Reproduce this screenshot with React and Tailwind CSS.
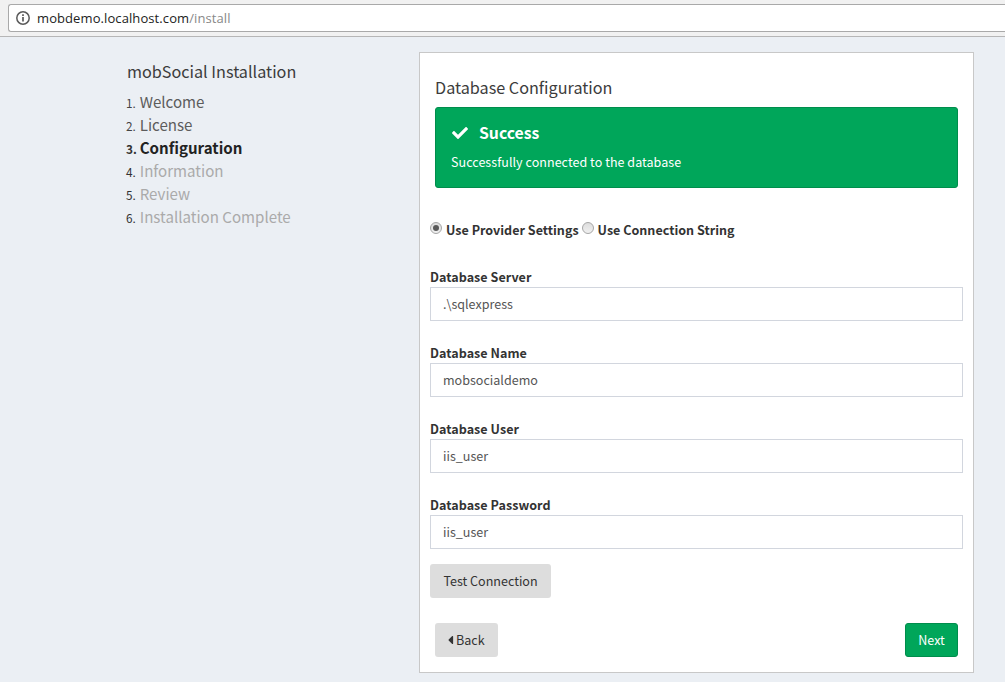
import React from "react";
import { FaCheck, FaCaretLeft } from "react-icons/fa";

const steps = [
  { name: "Welcome", tone: "text-[#5c5c5c]", num: "text-[#444444]" },
  { name: "License", tone: "text-[#5c5c5c]", num: "text-[#444444]" },
  { name: "Configuration", tone: "text-[#222222] font-bold", num: "text-[#333333] font-bold" },
  { name: "Information", tone: "text-[#aaaaaa]", num: "text-[#333333]" },
  { name: "Review", tone: "text-[#aaaaaa]", num: "text-[#333333]" },
  { name: "Installation Complete", tone: "text-[#aaaaaa]", num: "text-[#333333]" },
];

const fields = [
  { label: "Database Server", value: ".\\sqlexpress" },
  { label: "Database Name", value: "mobsocialdemo" },
  { label: "Database User", value: "iis_user" },
  { label: "Database Password", value: "iis_user" },
];

function AddressBar() {
  return (
    <header className="flex h-[37px] shrink-0 items-start border-b border-[#b6b6b6] bg-[#f1f1f1] pt-1 pl-2">
      <div className="flex h-7 flex-1 items-center rounded-l-[3px] border border-r-0 border-[#a9a9a9] bg-white pl-[7px]">
        <svg className="size-[14px] shrink-0" viewBox="0 0 14 14" fill="none">
          <circle cx="7" cy="7" r="6.2" stroke="#5a5a5a" strokeWidth="1.5" />
          <path d="M7 6v4.5M7 3.3v1.7" stroke="#5a5a5a" strokeWidth="1.7" />
        </svg>
        <span className="ml-[7px] font-['Open_Sans',sans-serif] text-[13px] leading-[18px] tracking-[0.09px] whitespace-nowrap text-[#222222]">
          mobdemo.localhost.com<span className="text-[#888888]">/install</span>
        </span>
      </div>
    </header>
  );
}

function Radio({ checked, label }) {
  return (
    <label className="flex items-start">
      <span className="flex size-3 items-center justify-center rounded-full border border-[#a6a6a6] bg-linear-to-b from-[#dddddd] to-[#f0f0f0]">
        {checked && <span className="size-[6px] rounded-full bg-[#5a5a5a]" />}
      </span>
      <span className="-mt-0.5 ml-1 text-[12.55px] leading-5 font-bold whitespace-nowrap">{label}</span>
    </label>
  );
}

export default function App() {
  return (
    <div className="flex h-[682px] w-[1005px] flex-col overflow-hidden bg-[#ebeff4] font-['Noto_Sans_CJK_SC',sans-serif] text-[12.5px] leading-5 text-[#333333]">
      <AddressBar />
      <div className="flex flex-1 items-start pt-[15px]">
        <aside className="w-[419px] shrink-0 pt-2 pl-[126px]">
          <h4 className="pl-px text-[16.2px] leading-[22px] whitespace-nowrap text-[#3c3c3c]">mobSocial Installation</h4>
          <ol className="mt-2">
            {steps.map((s, i) => (
              <li key={s.name} className="flex h-[23px] items-baseline whitespace-nowrap">
                <span className={`w-[14px] text-[11.8px] leading-[23px] ${s.num}`}>{i + 1}.</span>
                <span className={`-ml-[0.3px] text-[15.1px] leading-[23px] ${s.tone}`}>{s.name}</span>
              </li>
            ))}
          </ol>
        </aside>

        <main className="flex h-[621px] w-[555px] flex-col border border-[#c8c8c8] bg-white px-[10px] pt-[23px]">
          <h4 className="ml-[5px] h-[31px] text-[16.2px] leading-[22px] text-[#3c3c3c]">Database Configuration</h4>
          <section className="mx-[5px] h-[81px] rounded-[3px] border border-[#008d4c] bg-[#00a65a] px-[15px] pt-[13px] text-white">
            <div className="flex h-[23px] items-center">
              <FaCheck className="ml-px size-4" />
              <h4 className="ml-[11px] text-[15.8px] leading-[23px] font-bold">Success</h4>
            </div>
            <p className="mt-2 text-[12.5px] leading-5 tracking-[0.05px]">Successfully connected to the database</p>
          </section>

          <div className="mt-[34px] flex h-[45px] gap-[3px]">
            <Radio checked label="Use Provider Settings" />
            <Radio label="Use Connection String" />
          </div>

          {fields.map((f) => (
            <div key={f.label} className="h-[76px]">
              <label className="block h-5 text-[12.55px] leading-5 font-bold tracking-[0.04px]">{f.label}</label>
              <div className="flex h-[34px] items-center border border-[#d2d6de] px-3 text-[12.55px] text-[#555555]">
                {f.value}
              </div>
            </div>
          ))}

          <button className="-mt-[7px] h-[34px] w-[121px] shrink-0 rounded-[3px] bg-[#dddddd] text-[12.55px]">Test Connection</button>
          <div className="mx-[5px] mt-[25px] flex justify-between">
            <button className="flex h-[34px] w-[63px] items-center rounded-[3px] bg-[#dddddd] pl-3 text-[12.55px]">
              <FaCaretLeft className="mr-[2px] h-[14px] w-[7px]" />
              Back
            </button>
            <button className="h-[34px] w-[53px] rounded-[3px] border border-[#008d4c] bg-[#00a65a] text-[12.55px] text-white">Next</button>
          </div>
        </main>
      </div>
    </div>
  );
}
